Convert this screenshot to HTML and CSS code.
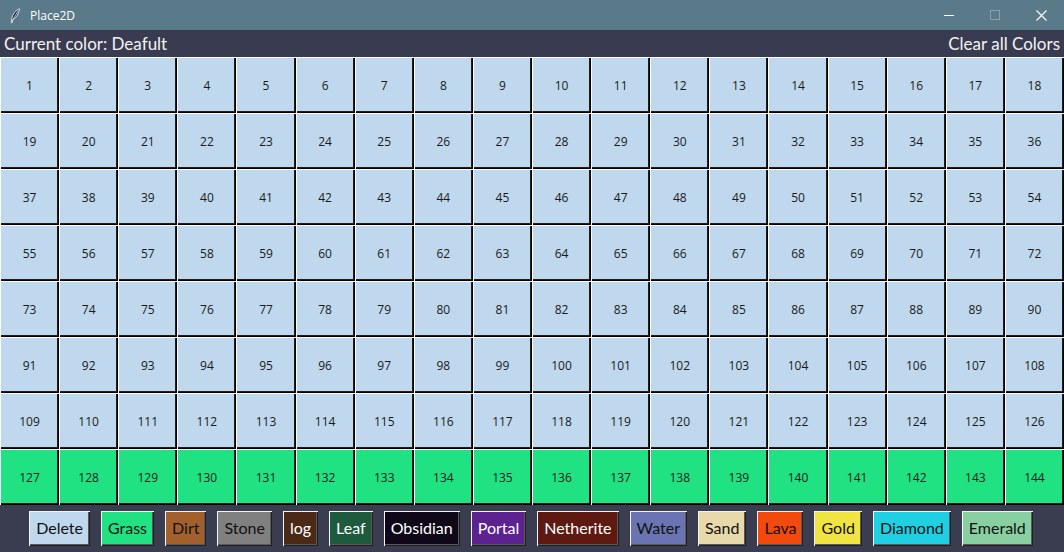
FILE: index.html
```html
<!DOCTYPE html>
<html>
<head>
<meta charset="utf-8">
<title>Place2D</title>
<link rel="stylesheet" href="styles.css">
</head>
<body>
<div class="window">
  <div class="titlebar">
    <div class="title-left">
      <svg class="feather" width="12" height="16" viewBox="0 0 12 16">
        <path d="M10.5 0.8 C7 2 3.5 6 2.6 11.2 L2.2 14.6 L3.1 14.8 L3.8 11.6 C7.5 9.5 10 5.5 10.5 0.8 Z" fill="#1d2d44" stroke="#e8eef4" stroke-width="0.9"/>
        <path d="M9.2 2.6 L3.4 12.6" stroke="#e8eef4" stroke-width="0.7"/>
      </svg>
      <span class="title-text">Place2D</span>
    </div>
    <div class="title-controls">
      <div class="ctrl"><svg width="10" height="10" viewBox="0 0 10 10"><path d="M0 5.5 H10" stroke="#ffffff" stroke-width="1"/></svg></div>
      <div class="ctrl"><svg width="10" height="10" viewBox="0 0 10 10"><rect x="0.5" y="0.5" width="9" height="9" fill="none" stroke="#8aa1ad" stroke-width="1"/></svg></div>
      <div class="ctrl"><svg width="11" height="11" viewBox="0 0 11 11"><path d="M0.5 0.5 L10.5 10.5 M10.5 0.5 L0.5 10.5" stroke="#ffffff" stroke-width="1.1"/></svg></div>
    </div>
  </div>
  <div class="header">
    <span class="current">Current color: Deafult</span>
    <span class="clear">Clear all Colors</span>
  </div>
  <div class="grid" id="grid"></div>
  <div class="palette">
    <button class="pbtn c-delete">Delete</button>
    <button class="pbtn c-grass">Grass</button>
    <button class="pbtn c-dirt">Dirt</button>
    <button class="pbtn c-stone">Stone</button>
    <button class="pbtn c-log">log</button>
    <button class="pbtn c-leaf">Leaf</button>
    <button class="pbtn c-obsidian">Obsidian</button>
    <button class="pbtn c-portal">Portal</button>
    <button class="pbtn c-netherite">Netherite</button>
    <button class="pbtn c-water">Water</button>
    <button class="pbtn c-sand">Sand</button>
    <button class="pbtn c-lava">Lava</button>
    <button class="pbtn c-gold">Gold</button>
    <button class="pbtn c-diamond">Diamond</button>
    <button class="pbtn c-emerald">Emerald</button>
  </div>
</div>
<script>
  var g = document.getElementById('grid');
  for (var i = 1; i <= 144; i++) {
    var d = document.createElement('div');
    d.className = 'cell' + (i > 126 ? ' green' : '');
    d.textContent = i;
    g.appendChild(d);
  }
</script>
</body>
</html>
```
FILE: styles.css
```css
html, body {
  margin: 0;
  padding: 0;
  background: #3a3c50;
}
.window {
  width: 1064px;
  height: 552px;
  overflow: hidden;
  display: flex;
  flex-direction: column;
  background: #3a3c50;
  border-bottom-left-radius: 7px;
  border-bottom-right-radius: 7px;
}
.titlebar {
  height: 30px;
  flex: none;
  background: #5a7a89;
  display: flex;
  justify-content: space-between;
  align-items: center;
}
.title-left {
  display: flex;
  align-items: center;
  padding-left: 9px;
}
.feather { margin-right: 9px; margin-top: 1px; }
.title-text {
  font-family: "Open Sans", "Noto Sans", sans-serif;
  font-size: 12px;
  color: #ffffff;
}
.title-controls {
  display: flex;
  height: 30px;
}
.ctrl {
  width: 46px;
  height: 30px;
  display: flex;
  align-items: center;
  justify-content: center;
}
.header {
  height: 27px;
  flex: none;
  background: #393b50;
  display: flex;
  justify-content: space-between;
  align-items: center;
  padding: 0 4px 0 4px;
  font-family: "Lato", "Open Sans", sans-serif;
  font-size: 17px;
  color: #f2f2f4;
}
.grid {
  height: 448px;
  flex: none;
  display: grid;
  grid-template-columns: repeat(18, 1fr);
  grid-template-rows: repeat(8, 56px);
}
.cell {
  background: #bfd8ed;
  box-shadow: inset 1px 1px 0 #ffffff, inset -1px -1px 0 #000000, inset -2px -2px 0 #1e1e1e;
  display: flex;
  align-items: center;
  justify-content: center;
  font-family: "Open Sans", "Noto Sans", sans-serif;
  font-size: 12px;
  color: #1a1a1a;
  padding-top: 1px;
}
.cell.green {
  background: #20e283;
}
.palette {
  flex: 1;
  display: flex;
  align-items: flex-start;
  justify-content: center;
  gap: 11px;
  padding-top: 6px;
  padding-right: 2px;
}
.pbtn {
  height: 35px;
  padding: 0 7px 2px 7px;
  margin: 0;
  border: none;
  box-shadow: inset 1px 1px 0 #f4f4f4, inset -1px -1px 0 #202020, inset -2px -2px 0 #5a5a5a;
  font-family: "Lato", "Open Sans", sans-serif;
  font-size: 16px;
  color: #111111;
}
.c-delete { background: #bfd8ed; }
.c-grass { background: #20e283; }
.c-dirt { background: #a2602c; }
.c-stone { background: #808080; }
.c-log { background: #4a2a16; color: #ffffff; }
.c-leaf { background: #1e5b3c; color: #ffffff; }
.c-obsidian { background: #0f0818; color: #ffffff; }
.c-portal { background: #5c2290; color: #ffffff; }
.c-netherite { background: #5e1a10; color: #ffffff; }
.c-water { background: #6a74b2; }
.c-sand { background: #e8d9aa; }
.c-lava { background: #f24a0c; }
.c-gold { background: #f0e442; }
.c-diamond { background: #1ed0e2; }
.c-emerald { background: #88d0a2; }
```
